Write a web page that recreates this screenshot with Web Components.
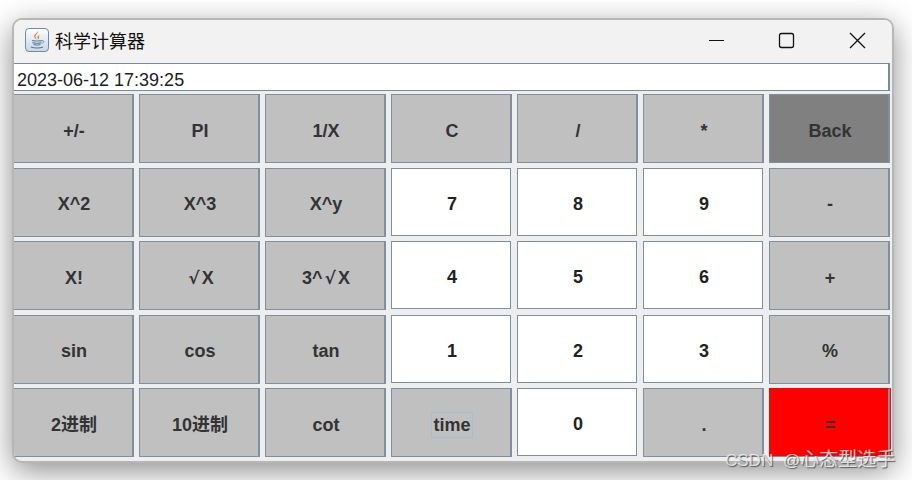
<!DOCTYPE html>
<html>
<head>
<meta charset="utf-8">
<title>科学计算器</title>
<style>
  html, body { margin: 0; padding: 0; background: #fff; }
  body { width: 912px; height: 480px; overflow: hidden; padding: 18px 0 0 12px; box-sizing: border-box; }
  .root { font-family: "DejaVu Sans", sans-serif; font-size: 17px; margin: 0 2px; }
  .cjk { font-size: 19px; }
</style>
</head>
<body>
<calc-window>
  <title-bar slot="bar">科学计算器</title-bar>
  <calc-display slot="display">2023-06-12 17:39:25</calc-display>
  <calc-key>+/-</calc-key><calc-key>PI</calc-key><calc-key>1/X</calc-key><calc-key>C</calc-key><calc-key>/</calc-key><calc-key>*</calc-key><calc-key kind="back">Back</calc-key>
  <calc-key>X^2</calc-key><calc-key>X^3</calc-key><calc-key>X^y</calc-key><calc-key kind="num">7</calc-key><calc-key kind="num">8</calc-key><calc-key kind="num">9</calc-key><calc-key>-</calc-key>
  <calc-key>X!</calc-key><calc-key><span class="root">√</span>X</calc-key><calc-key>3^<span class="root">√</span>X</calc-key><calc-key kind="num">4</calc-key><calc-key kind="num">5</calc-key><calc-key kind="num">6</calc-key><calc-key>+</calc-key>
  <calc-key>sin</calc-key><calc-key>cos</calc-key><calc-key>tan</calc-key><calc-key kind="num">1</calc-key><calc-key kind="num">2</calc-key><calc-key kind="num">3</calc-key><calc-key>%</calc-key>
  <calc-key>2进制</calc-key><calc-key>10进制</calc-key><calc-key>cot</calc-key><calc-key focused>time</calc-key><calc-key kind="num">0</calc-key><calc-key>.</calc-key><calc-key kind="equals">=</calc-key>
</calc-window>
<water-mark>CSDN @<span class="cjk">心态型选手</span></water-mark>

<script>
class CalcWindow extends HTMLElement {
  connectedCallback() {
    this.attachShadow({ mode: 'open' });
    this.shadowRoot.innerHTML = `
      <style>
        :host {
          display: flex;
          flex-direction: column;
          box-sizing: border-box;
          width: 882px;
          height: 445px;
          border: 2px solid #b6b6b6;
          border-radius: 10px;
          background: #eeeeee;
          box-shadow: 0 8px 30px rgba(0,0,0,0.45);
          overflow: hidden;
        }
        .keys {
          display: grid;
          grid-template-columns: repeat(7, 121px);
          grid-template-rows: repeat(5, 69px);
          column-gap: 5px;
          row-gap: 4.5px;
          margin: 3px 0 0 -1px;
        }
      </style>
      <slot name="bar"></slot>
      <slot name="display"></slot>
      <div class="keys"><slot></slot></div>
    `;
  }
}

class TitleBar extends HTMLElement {
  connectedCallback() {
    this.attachShadow({ mode: 'open' });
    this.shadowRoot.innerHTML = `
      <style>
        :host {
          display: flex;
          align-items: center;
          box-sizing: border-box;
          height: 43px;
          padding-bottom: 4px;
          background: #f2f2f2;
          font: 18px "Noto Sans CJK SC", "Liberation Sans", sans-serif;
          color: #111;
        }
        .icon { width: 24px; height: 24px; margin: 0 6px 0 11px; flex: none; }
        .name { flex: 1; line-height: 24px; }
        .ctl { width: 24px; height: 24px; flex: none; }
        .min { margin-right: 46px; }
        .max { margin-right: 47px; }
        .close { margin-right: 23px; }
      </style>
      <svg class="icon" viewBox="0 0 24 24">
        <defs>
          <linearGradient id="g" x1="0" y1="0" x2="0" y2="1">
            <stop offset="0" stop-color="#fdfdfd"/><stop offset="1" stop-color="#c9d6e2"/>
          </linearGradient>
        </defs>
        <rect x="0.5" y="0.5" width="23" height="23" rx="3.5" fill="url(#g)" stroke="#6f8ba5"/>
        <path d="M13 3c1 2-3 3.5-2.5 6 .2 1 1 1.600 1 2.500-1.500-1-2.700-2.300-2.200-4C9.800 5.800 12.800 5 13 3zM15 6.500c-1.500 1-3 1.700-2.500 3.300.2.600.6 1 .5 1.700 1-.7 1.300-1.500 1-2.500-.3-1 0-1.600 1-2.500z" fill="#e0762a"/>
        <path d="M7 12.500c2 .7 8 .7 10 0M7.500 14.600c2 .6 7 .6 9 0M8.500 16.500c1.700.5 5.300.5 7 0" fill="none" stroke="#5f86a8" stroke-width="1.100"/>
        <path d="M17 12.800c2-.6 2.600 1.400.5 2.400" fill="none" stroke="#5f86a8" stroke-width="0.900"/>
        <path d="M6 19c3 1.300 9 1.300 12 0" fill="none" stroke="#4f7799" stroke-width="1.200"/>
      </svg>
      <span class="name"><slot></slot></span>
      <svg class="ctl min" viewBox="0 0 24 24"><path d="M5 12.500h15" stroke="#111" stroke-width="1.200" fill="none"/></svg>
      <svg class="ctl max" viewBox="0 0 24 24"><rect x="5.500" y="5.500" width="14" height="14" rx="2" fill="none" stroke="#111" stroke-width="1.300"/></svg>
      <svg class="ctl close" viewBox="0 0 24 24"><path d="M5 5l15 15M20 5L5 20" stroke="#111" stroke-width="1.300" fill="none"/></svg>
    `;
  }
}

class CalcDisplay extends HTMLElement {
  connectedCallback() {
    this.attachShadow({ mode: 'open' });
    this.shadowRoot.innerHTML = `
      <style>
        :host {
          display: block;
          box-sizing: border-box;
          width: 876px;
          height: 28px;
          padding: 5px 0 0 3px;
          background: #fff;
          border-top: 1px solid #7a8a99;
          border-bottom: 1px solid #7a8a99;
          border-right: 2px solid #7a8a99;
          font: 18px/23px "Liberation Sans", Arial, sans-serif;
          color: #222;
        }
      </style>
      <slot></slot>
    `;
  }
}

class CalcKey extends HTMLElement {
  connectedCallback() {
    this.attachShadow({ mode: 'open' });
    this.shadowRoot.innerHTML = `
      <style>
        :host {
          display: flex;
          align-items: center;
          justify-content: center;
          box-sizing: border-box;
          padding: 4.9px 0 0 2px;
          background: #c0c0c0;
          border: 1px solid #7f8f9f;
          border-right-width: 2px;
          font: bold 18px/24px "Liberation Sans", Arial, "Noto Sans CJK SC", sans-serif;
          color: #333;
        }
        :host([kind="num"]) { background: #fff; border-right-width: 1px; margin: 0 1px 1px 0; color: #222; }
        :host([kind="back"]) { background: #808080; }
        :host([kind="equals"]) {
          background: #ff0000;
          border-color: #ff0000 #7f8f9f #7f8f9f #ff0000;
          box-shadow: 1px 0 0 #ff0000;
        }
        .label { display: block; border: 1px solid transparent; padding: 0 1.5px; }
        :host([focused]) .label { border-color: #a9bdd2; }
      </style>
      <span class="label"><slot></slot></span>
    `;
  }
}

class WaterMark extends HTMLElement {
  connectedCallback() {
    this.attachShadow({ mode: 'open' });
    this.shadowRoot.innerHTML = `
      <style>
        :host {
          position: absolute;
          left: 725px;
          top: 447px;
          font: 17px/26px "Liberation Sans", "Noto Sans CJK SC", sans-serif;
          word-spacing: 5px;
          color: rgba(255,255,255,0.72);
          text-shadow: 1px 1px 1px rgba(50,50,50,0.7);
          white-space: nowrap;
        }
      </style>
      <slot></slot>
    `;
  }
}

customElements.define('calc-window', CalcWindow);
customElements.define('title-bar', TitleBar);
customElements.define('calc-display', CalcDisplay);
customElements.define('calc-key', CalcKey);
customElements.define('water-mark', WaterMark);
</script>
</body>
</html>
